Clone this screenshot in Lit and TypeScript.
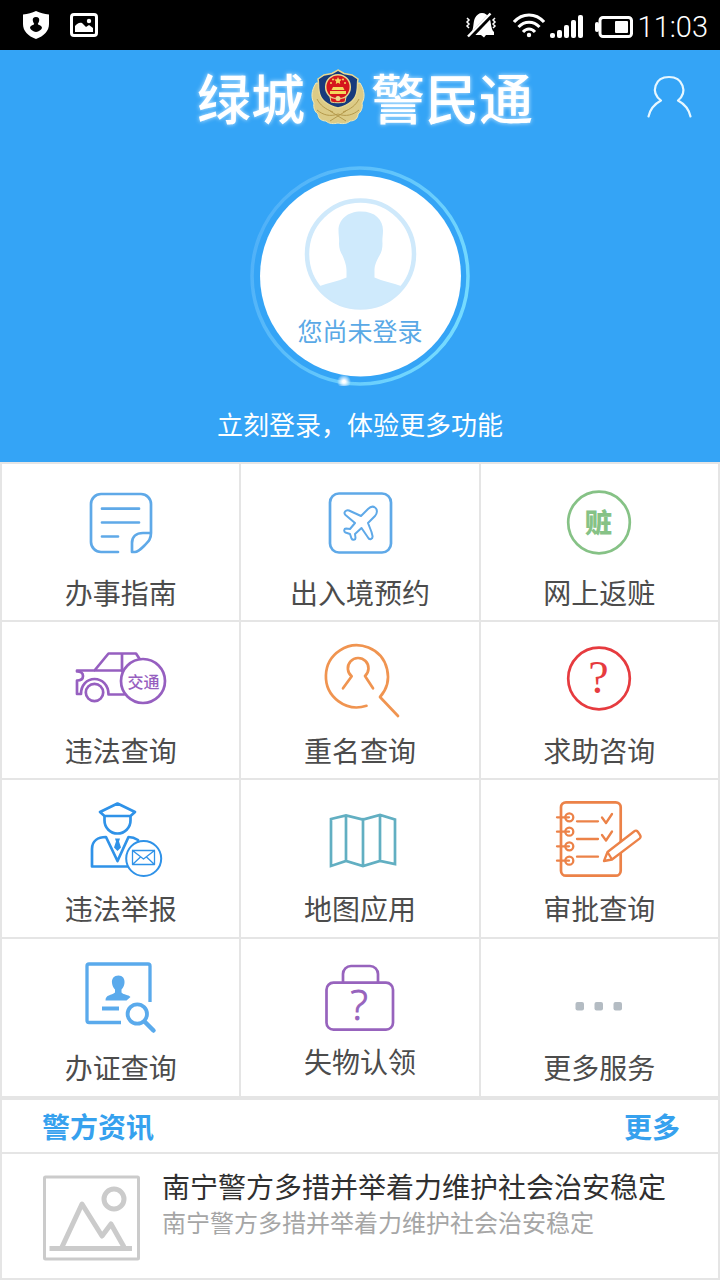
import { LitElement, html, css, svg, TemplateResult, SVGTemplateResult } from "lit";
import { customElement, property } from "lit/decorators.js";

interface Service {
  label: string;
  icon: TemplateResult;
  compact?: boolean;
}

const art = (viewBox: string, color: string, body: SVGTemplateResult) => html`
  <svg viewBox=${viewBox} width="100" height="80" color=${color} fill="none" stroke="currentColor"
    stroke-width="2.7" stroke-linecap="round" stroke-linejoin="round" aria-hidden="true">${body}</svg>
`;

const services: Service[] = [
  {
    label: "办事指南",
    icon: art("71 483 100 80", "#5fa9e8", svg`
      <path d="M118 552H101a10 10 0 0 1-10-10V504a10 10 0 0 1 10-10h40a10 10 0 0 1 10 10v29h-8c-7 0-11 4-11 10v9h3c3 0 6-3 9-6 5-5 7-7 7-13"/>
      <path d="M102 508.700h37M102 522.500h37M102 536.500h16"/>`),
  },
  {
    label: "出入境预约",
    icon: art("310 483 100 80", "#5fa9e8", svg`
      <rect x="330" y="493.500" width="61" height="59" rx="9"/>
      <path stroke-width="2" d="M375 507.500c-2-1.500-5-.5-7 1.500l-7 7-12-5.500c-3-1-6 2-3.500 4.500l9.500 8-5 6-4-.5c-2 0-2.500 3-.5 4l4.500 1.500 1.500 4.500c1 2 4 1.500 4-.5l-.5-4 6.500-6 6.500 9.500c1.500 3 5 1.500 4.500-1.500l-1-4-3.500-9 7-7c2-2 3-6.500 0-8.500z"/>`),
  },
  {
    label: "网上返赃",
    icon: art("549 483 100 80", "#86c286", svg`
      <circle cx="599" cy="522.500" r="30.800"/>
      <text x="598.500" y="533" class="glyph heavy" font-size="27">赃</text>`),
  },
  {
    label: "违法查询",
    icon: art("71 641 100 80", "#965fc0", svg`
      <path d="M94.500 670.500l14-17H136l4 6M122 653.500V671M77 670.500h46"/>
      <path d="M77 671.500c3 0 6 1 6 4.500s-2 4.500-6 4.500V694h4c0-9 6-15 13.500-15s14 6 14 15.500H124"/>
      <circle cx="94.500" cy="692.500" r="8.700"/>
      <circle cx="143" cy="681" r="22" fill="#fff"/>
      <text x="143.500" y="688" class="glyph medium" font-size="16">交通</text>`),
  },
  {
    label: "重名查询",
    icon: art("310 641 100 80", "#f09450", svg`
      <path d="M366.500 705.800A31 31 0 1 1 380 697L398 716"/>
      <path d="M343 688.300l8.700-12A10.300 10.300 0 1 1 365 676l8 12.300"/>`),
  },
  {
    label: "求助咨询",
    icon: art("549 641 100 80", "#e63b3f", svg`
      <circle cx="599" cy="678.500" r="30.800"/>
      <text x="598.500" y="693" class="glyph serif" font-size="46">?</text>`),
  },
  {
    label: "违法举报",
    icon: art("71 799 100 80", "#2f92e8", svg`
      <path d="M117.500 803.500l17.500 8.500-4.500 4H104.500L100 812z"/>
      <path d="M104.500 816.500v4a13 13 0 0 0 26 0v-4"/>
      <path d="M138 840c-3-2-6-3-9.500-3l-11 24-11.500-24c-8 0-14 4-14 12v17.500h36"/>
      <path d="M115 838.500h5l-1 3 2 6-3.500 3.500-3.500-3.500 2-6z" fill="currentColor" stroke="none"/>
      <circle cx="143.700" cy="858.500" r="17.500" fill="#fff" stroke-width="2"/>
      <path stroke-width="1.300" d="M132.500 850.500h22v14h-22zl11 8.500 11-8.500M132.500 864.500l8-7.500M154.500 864.500l-8-7.500"/>`),
  },
  {
    label: "地图应用",
    icon: art("310 799 100 80", "#62afc2", svg`
      <path stroke-linejoin="miter" d="M331 819l15-3.500 17 4 17-4.500 15 4.500V864l-15-3-17 5-17-5-15 5zM346 816v45M363 819v46M380 815v46"/>`),
  },
  {
    label: "审批查询",
    icon: art("549 799 100 80", "#ec8248", svg`
      <rect x="561" y="802.300" width="59.700" height="73.400" rx="5"/>
      <g stroke-width="2.300">
        <circle cx="569.300" cy="817.300" r="4"/><circle cx="569.300" cy="831.700" r="4"/>
        <circle cx="569.300" cy="846.300" r="4"/><circle cx="569.300" cy="860.700" r="4"/>
        <path d="M557 817.300h12M557 831.700h12M557 846.300h12M557 860.700h12"/>
        <path d="M577 821.300h21M577 839h21M577 856.700h21M602 817.500l4 5.500 6-9M602 835l4 5.500 6-9"/>
        <path fill="#fff" d="M604 861l3.500-9L634 831.500c1.500-1.200 3-1 4 .5l2 3c1 1.500 1 2.500-.5 3.700L612 859.500zM607.500 852l4.500 7.500"/>
      </g>`),
  },
  {
    label: "办证查询",
    icon: art("71 958 100 80", "#5aaaec", svg`
      <path stroke-width="3.300" stroke-linecap="butt" d="M121 1022.500H89a2 2 0 0 1-2-2V966a2 2 0 0 1 2-2h59a2 2 0 0 1 2 2v36"/>
      <path fill="currentColor" stroke="none" d="M118.500 975.500c4 0 6.500 3 6 7.500-.3 3-1.500 5-3 6.500v3c2 2.500 7 2 9 4.500l-4 3.500h-21c0-6 6-5 9.500-8v-3c-1.500-1.500-2.700-3.500-3-6.500-.5-4.500 2-7.500 6.500-7.500z"/>
      <path stroke-width="4" stroke-linecap="butt" d="M102 1008.500h17"/>
      <circle cx="137.300" cy="1014" r="9.700" stroke-width="3.800"/>
      <path stroke-width="4.500" d="M145 1022l8.500 8.500"/>`),
  },
  {
    label: "失物认领",
    compact: true,
    icon: art("310 958 100 80", "#9763bd", svg`
      <rect x="326.500" y="982.700" width="66.500" height="47" rx="7"/>
      <path d="M343 982v-8a8 8 0 0 1 8-8h19a8 8 0 0 1 8 8v8"/>
      <text x="359" y="1020" class="glyph thin" font-size="42">?</text>`),
  },
  {
    label: "更多服务",
    icon: art("549 958 100 80", "#b4bcc3", svg`
      <g fill="currentColor" stroke="none">
        <rect x="575.500" y="1002" width="8.500" height="8.500" rx="2"/>
        <rect x="594.500" y="1002" width="8.500" height="8.500" rx="2"/>
        <rect x="613.500" y="1002" width="8.500" height="8.500" rx="2"/>
      </g>`),
  },
];

@customElement("status-bar")
class StatusBar extends LitElement {
  static styles = css`
    :host { display: flex; justify-content: space-between; align-items: center; height: 50px; padding: 0 12px 0 22px; background: #000; color: #fff; }
    .group { display: flex; align-items: center; }
    .left { gap: 20px; }
    .right { gap: 4px; }
    svg { display: block; }
    .time { padding-top: 4px; font: 300 29px/46px Roboto, sans-serif; }
  `;
  render() {
    return html`
      <div class="group left">
        <svg viewBox="22 10 28 30" width="28" height="30" aria-hidden="true">
          <path fill="#fff" d="M36 11c4 2 8 3 13 3.500V24c0 7-5 12-13 15-8-3-13-8-13-15v-9.500c5-.5 9-1.500 13-3.500z"/>
          <path fill="#000" d="M36 17c2.500 0 3.500 1.500 3.200 3.500-.2 1.500-1 2.500-1.400 3.300.2 1.500 4 1.400 4.200 4.200-1 2-3 3.500-6 4-3-.5-5-2-6-4 .2-2.800 4-2.700 4.200-4.200-.4-.8-1.200-1.800-1.400-3.300C32.500 18.500 33.500 17 36 17z"/>
        </svg>
        <svg viewBox="70 10 28 30" width="28" height="30" aria-hidden="true">
          <rect x="71.500" y="14.500" width="25" height="21" rx="2.500" fill="none" stroke="#fff" stroke-width="3"/>
          <path fill="#fff" d="M75 32v-6c2-2 4-4 7-3l4 4 3-2 4 3v4z"/><circle cx="89" cy="21" r="2.200" fill="#fff"/>
        </svg>
      </div>
      <div class="group right">
        <svg viewBox="467 11 44 30" width="44" height="30" aria-hidden="true">
          <path fill="#fff" d="M473 34c3-3 2-12 4-15 1.500-3 4-5 7-5s6 2 7.500 5c2 4 1 11 4.500 14v3h-8l-2 2.500-3-2.500h-8z"/>
          <path stroke="#000" stroke-width="5" d="M471 39l23-24"/>
          <path stroke="#fff" stroke-width="2.500" d="M470 37.500L492.500 14.500"/>
          <path fill="none" stroke="#fff" stroke-width="1.500" d="M469 19l2 2-2 2 2 2-2 2 2 2M497 19l-2 2 2 2-2 2 2 2-2 2"/>
        </svg>
        <svg viewBox="515 11 32 30" width="32" height="30" fill="none" stroke="#fff" stroke-width="3" aria-hidden="true">
          <path d="M516 23c8-9.500 22-9.500 30 0M520.500 28c6-6.500 15-6.500 21 0M525 33c3.500-4 8.500-4 12 0"/>
          <circle cx="531" cy="36" r="2.200" fill="#fff" stroke="none"/>
        </svg>
        <svg viewBox="551 10 41 30" width="41" height="30" fill="#fff" aria-hidden="true">
          <rect x="552" y="33" width="5" height="5" rx="2"/><rect x="559" y="30" width="5" height="8" rx="2"/>
          <rect x="566" y="25" width="5" height="13" rx="2"/><rect x="573" y="20" width="5" height="18" rx="2"/>
          <rect x="580" y="15" width="5" height="23" rx="2"/>
        </svg>
        <svg viewBox="596 10 40 30" width="40" height="30" aria-hidden="true">
          <rect x="602" y="17.500" width="31.500" height="19" rx="3" fill="none" stroke="#fff" stroke-width="3"/>
          <rect x="597" y="22" width="4" height="10" rx="2" fill="#fff"/><rect x="617" y="21" width="13" height="12" rx="1" fill="#fff"/>
        </svg>
        <span class="time">11:03</span>
      </div>`;
  }
}

@customElement("login-hero")
class LoginHero extends LitElement {
  static styles = css`
    :host { display: flex; flex-direction: column; align-items: center; background: #34a4f6; color: #fff; padding-bottom: 20px; }
    .header { align-self: stretch; box-sizing: border-box; display: grid; grid-template-columns: 1fr auto 1fr; align-items: center; height: 100px; padding: 0 28px 6px 38px; }
    .brand { grid-column: 2; display: flex; align-items: center; gap: 6px; margin: 0; font-size: 54px; line-height: 60px; font-weight: 500; font-family: STXingkai, KaiTi, "Noto Sans CJK SC", sans-serif; text-shadow: 0 0 4px #cdeaff; }
    button { border: 0; padding: 0; background: none; font: inherit; color: inherit; cursor: pointer; }
    svg { display: block; }
    .account { justify-self: end; }
    .avatar { display: grid; margin-top: 16px; border-radius: 50%; }
    .avatar > * { grid-area: 1 / 1; }
    .state { align-self: end; justify-self: center; margin-bottom: 38px; font-size: 25px; line-height: 36px; color: #5aa9e6; }
    .hint { margin: 20px 0 0; font-size: 26px; line-height: 36px; }
  `;
  render() {
    return html`
      <header class="header">
        <h1 class="brand">
          <span>绿城</span>
          <svg viewBox="307 68 54 60" width="54" height="60" aria-hidden="true">
            <path fill="#dccb86" stroke="#f3e8b4" d="M312 84c-5 8-5 15-2 20-1 5 1 9 4 11 0 4 3 7 8 7 3 3 8 3 12 2 4 1 9 1 12-2 5 0 8-3 8-7 3-2 5-6 4-11 3-5 3-12-2-20z"/>
            <path fill="none" stroke="#b59a4c" d="M313 100c3 6 8 10 16 13M355 100c-3 6-8 10-16 13M313 111c6 5 13 7 21 4M355 111c-6 5-13 7-21 4M326 112l16 10M342 112l-16 10"/>
            <path fill="#173a7c" stroke="#e7d793" stroke-width="1.500" d="M334 71l6 3.500 8 1.500 6 4c-1 4 0 7-1 12-1 8-7 14-19 17-12-3-18-9-19-17-1-5 0-8-1-12l6-4 8-1.500z"/>
            <circle cx="334" cy="88" r="12.300" fill="#d5161d" stroke="#ecd98b" stroke-width="1.500"/>
            <path fill="#f5d75d" d="M334 78l1.100 2.300 2.500.3-1.800 1.800.4 2.500-2.200-1.200-2.200 1.200.4-2.500-1.800-1.800 2.500-.3zM326 92h16v3h-16zM329 88h10l1.500 3h-13z"/>
            <g fill="#f5d75d"><circle cx="327" cy="84" r="1"/><circle cx="341" cy="84" r="1"/><circle cx="329" cy="80.500" r="1"/><circle cx="339" cy="80.500" r="1"/></g>
            <path fill="#d5161d" stroke="#ecd98b" d="M326 98c3 2 13 2 16 0l-1 5c-4 1-10 1-14 0z"/><circle cx="334" cy="99.500" r="2.500" fill="#ecd98b"/>
          </svg>
          <span>警民通</span>
        </h1>
        <button class="account" aria-label="个人中心">
          <svg viewBox="646 73 46 46" width="46" height="46" fill="none" stroke="#e6f7ff" stroke-width="2.200" stroke-linecap="round" stroke-linejoin="round">
            <path d="M648.500 115.500c1.500-7 6-12.500 12.500-16C650 91 655 76 669 76s19 15 9 23.500c6.500 3.500 11 9 12.500 16"/>
          </svg>
        </button>
      </header>
      <button class="avatar">
        <svg viewBox="250 166 220 220" width="220" height="220" aria-hidden="true">
          <defs>
            <linearGradient id="ring" x1="0" y1="0.300" x2="1" y2="0.700">
              <stop offset="0" stop-color="#4fb0f8"/><stop offset="1" stop-color="#76dcff"/>
            </linearGradient>
            <radialGradient id="spark"><stop offset="0.200" stop-color="#fff"/><stop offset="1" stop-color="#fff" stop-opacity="0"/></radialGradient>
            <clipPath id="bust"><circle cx="360.500" cy="254" r="54"/></clipPath>
          </defs>
          <circle cx="360" cy="276" r="108" fill="none" stroke="url(#ring)" stroke-width="3.500"/>
          <circle cx="344" cy="381.500" r="7" fill="url(#spark)"/>
          <circle cx="360.500" cy="276" r="100.500" fill="#fff"/>
          <circle cx="360.500" cy="254" r="53.500" fill="none" stroke="#cfe9fb" stroke-width="4.500"/>
          <path clip-path="url(#bust)" fill="#cfeafc" d="M361 211.500c14 0 22 8 22 19 0 5-1 9-.5 13 0 5-1 9-3 12-4 7-5 11-5 15l0 7c8 4 18 5 28 9v30h-84v-30c10-4 20-5 28-9l0-7c0-4-1-8-4-15-2-3-3.500-7-3.500-12 .5-4-.5-8-.5-13 0-11 9-19 22.500-19z"/>
        </svg>
        <span class="state">您尚未登录</span>
      </button>
      <p class="hint">立刻登录，体验更多功能</p>`;
  }
}

@customElement("service-grid")
class ServiceGrid extends LitElement {
  @property({ attribute: false }) items: Service[] = [];
  static styles = css`
    :host { display: grid; grid-template-columns: repeat(3, 1fr); grid-template-rows: repeat(2, 156px) repeat(2, 157px); gap: 2px; padding: 2px 2px 4px; background: #e5e5e5; }
    .tile { display: flex; flex-direction: column; align-items: center; gap: 9px; padding-top: 19px; background: #fff; color: #4c4c4c; text-decoration: none; font-size: 28px; line-height: 40px; }
    .compact { gap: 3px; }
    svg { display: block; overflow: visible; }
    .glyph { fill: currentColor; stroke: none; text-anchor: middle; font-family: "Noto Sans CJK SC", sans-serif; }
    .heavy { font-weight: 900; }
    .medium { font-weight: 500; }
    .serif { font-family: "Liberation Serif", serif; }
    .thin { font-family: "Open Sans", sans-serif; font-weight: 300; stroke: currentColor; stroke-width: 1px; }
  `;
  render() {
    return this.items.map((s) => html`
      <a class="tile ${s.compact ? "compact" : ""}" href="#">${s.icon}<span>${s.label}</span></a>`);
  }
}

@customElement("news-panel")
class NewsPanel extends LitElement {
  static styles = css`
    :host { display: flex; flex-direction: column; gap: 2px; padding: 0 2px 2px; background: #e5e5e5; }
    .bar { display: flex; justify-content: space-between; align-items: center; height: 52px; padding: 0 38px 0 40px; background: #fff; color: #36a1ee; font-size: 28px; line-height: 40px; font-weight: 700; }
    h2 { margin: 0; font: inherit; }
    a { color: inherit; text-decoration: none; }
    .item { display: flex; gap: 22px; padding: 12px 40px 17px; background: #fff; }
    .thumb { display: block; flex: none; margin-top: 9px; }
    .copy { display: flex; flex-direction: column; min-width: 0; }
    .title { font-size: 28px; line-height: 40px; color: #303030; }
    .summary { font-size: 24px; line-height: 32px; color: #a6a6a6; }
  `;
  render() {
    return html`
      <div class="bar"><h2>警方资讯</h2><a href="#">更多</a></div>
      <a class="item" href="#">
        <svg class="thumb" viewBox="43 1175 98 86" width="98" height="86" fill="none" stroke="#cbcbcb" stroke-linejoin="round" aria-hidden="true">
          <rect x="45.500" y="1177" width="94" height="82" rx="1" stroke-width="3"/>
          <circle cx="115" cy="1199" r="10" stroke-width="5"/>
          <path stroke-width="5" d="M63 1247l20-43 20 32 9-12 13 23M50.500 1248.500H133"/>
        </svg>
        <span class="copy">
          <span class="title">南宁警方多措并举着力维护社会治安稳定</span>
          <span class="summary">南宁警方多措并举着力维护社会治安稳定</span>
        </span>
      </a>`;
  }
}

@customElement("app-root")
class AppRoot extends LitElement {
  static styles = css`
    :host { display: block; background: #fff; font-family: "Noto Sans CJK SC", sans-serif; }
  `;
  render() {
    return html`
      <status-bar></status-bar>
      <login-hero></login-hero>
      <service-grid .items=${services}></service-grid>
      <news-panel></news-panel>`;
  }
}
